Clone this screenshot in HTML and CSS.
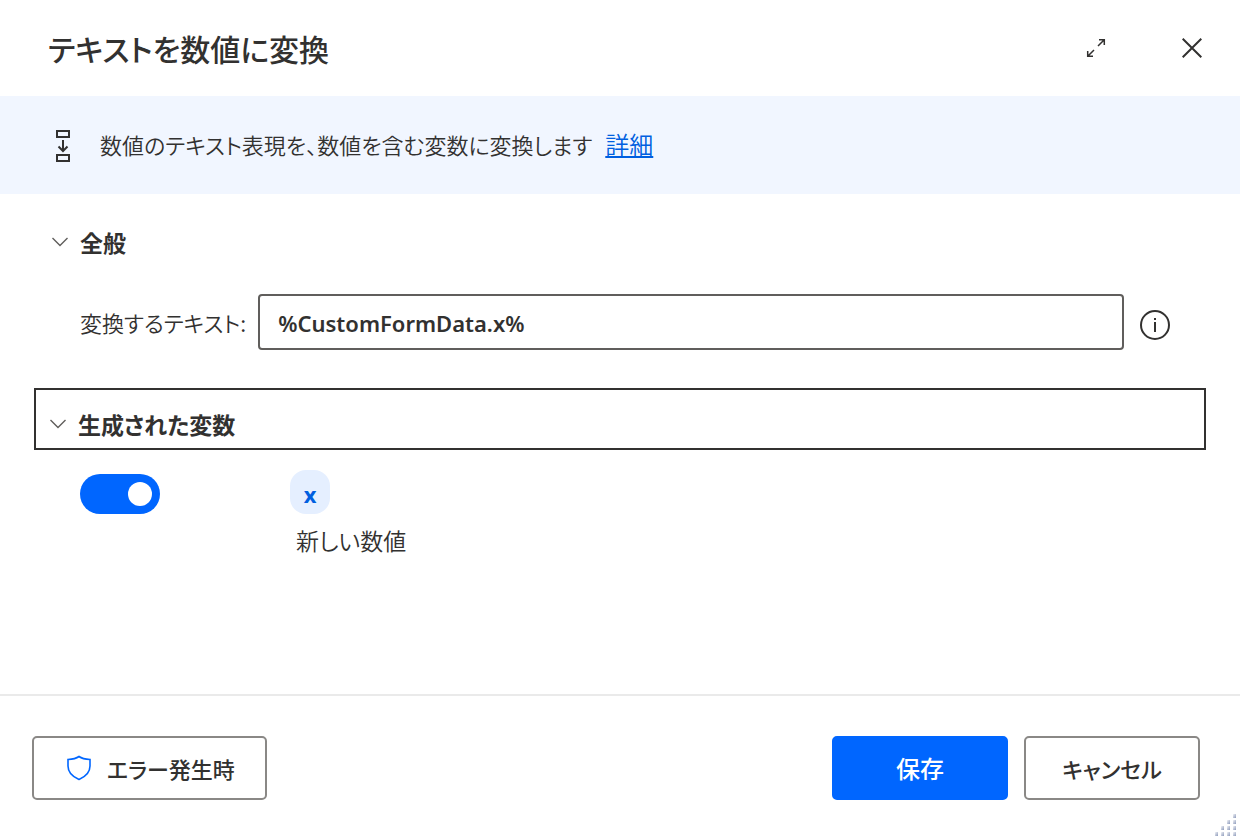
FILE: index.html
```html
<!DOCTYPE html>
<html lang="ja">
<head>
<meta charset="utf-8">
<title>テキストを数値に変換</title>
<link rel="stylesheet" href="styles.css">
</head>
<body>
<main class="dialog">
  <header class="titlebar">
    <h1 class="title">テキストを数値に変換</h1>
    <button class="window-button" type="button" aria-label="拡大">
      <svg width="20" height="20" viewBox="0 0 20 20" fill="none" stroke="currentColor" stroke-width="1.5"><path d="M12 8l6-6M13 1.7h5.3V7M8 12l-6 6M1.7 13v5.3H7"/></svg>
    </button>
    <button class="window-button" type="button" aria-label="閉じる">
      <svg width="20" height="20" viewBox="0 0 20 20" fill="none" stroke="currentColor" stroke-width="2"><path d="M.7.7l18.6 18.6M19.3.7L.7 19.3"/></svg>
    </button>
  </header>

  <section class="banner">
    <svg class="banner-icon" width="14" height="32" viewBox="0 0 14 32" fill="none" stroke="currentColor" stroke-width="2"><path d="M1 1h12v6H1zM1 25h12v6H1zM7 10v11M2.5 16.500L7 21l4.500-4.500"/></svg>
    <p class="banner-text">数値のテキスト表現を、数値を含む変数に変換します <a class="link" href="#">詳細</a></p>
  </section>

  <form class="body" id="action">
    <button class="section-toggle" type="button" aria-expanded="true">
      <svg width="16" height="10" viewBox="0 0 16 10" fill="none" stroke="currentColor" stroke-width="1.4"><path d="M.5 1L8 8.500 15.500 1"/></svg>
      全般
    </button>
    <div class="field">
      <label class="field-label" for="source">変換するテキスト:</label>
      <input class="field-input" id="source" type="text" value="%CustomFormData.x%">
      <button class="info" type="button" aria-label="情報">
        <svg width="30" height="30" viewBox="0 0 30 30" fill="none" stroke="currentColor" stroke-width="2"><circle cx="15" cy="15" r="14"/><path d="M15 12v10M15 8v2"/></svg>
      </button>
    </div>
    <button class="section-toggle section-toggle-focused" type="button" aria-expanded="true">
      <svg width="16" height="10" viewBox="0 0 16 10" fill="none" stroke="currentColor" stroke-width="1.4"><path d="M.5 1L8 8.500 15.500 1"/></svg>
      生成された変数
    </button>
    <div class="variable">
      <input class="switch" type="checkbox" role="switch" aria-label="変数を生成" checked>
      <div class="variable-info">
        <button class="chip" type="button">x</button>
        <span class="variable-type">新しい数値</span>
      </div>
    </div>
  </form>

  <footer class="footer">
    <button class="button button-error" type="button">
      <svg class="shield" width="24" height="26" viewBox="0 0 24 26" fill="none" stroke="currentColor" stroke-width="1.600"><path d="M12 1.500C9.500 3.300 5 4.300 1 4.500V11c0 6 4 10.500 11 13.500C19 21.500 23 17 23 11V4.500C19 4.300 14.500 3.300 12 1.500z"/></svg>
      エラー発生時
    </button>
    <button class="button button-primary" type="submit" form="action">保存</button>
    <button class="button" type="button">キャンセル</button>
  </footer>
  <svg class="grip" width="21" height="22" viewBox="0 0 21 22" aria-hidden="true">
    <defs>
      <linearGradient id="dot" x1="0" y1="0" x2="1" y2="1"><stop offset="0" stop-color="#f4f5f7"/><stop offset="1" stop-color="#8c9abb"/></linearGradient>
    </defs>
    <g fill="url(#dot)">
      <rect x="18" y="0" width="3" height="4"/>
      <rect x="12" y="6" width="3" height="4"/><rect x="18" y="6" width="3" height="4"/>
      <rect x="6" y="12" width="3" height="4"/><rect x="12" y="12" width="3" height="4"/><rect x="18" y="12" width="3" height="4"/>
      <rect x="0" y="18" width="3" height="4"/><rect x="6" y="18" width="3" height="4"/><rect x="12" y="18" width="3" height="4"/><rect x="18" y="18" width="3" height="4"/>
    </g>
  </svg>
</main>
</body>
</html>
```
FILE: styles.css
```css
* { box-sizing: border-box; }

body {
  margin: 0;
  background: #fff;
  color: #323130;
  font: 350 22px/32px "Noto Sans CJK JP", sans-serif;
  font-feature-settings: "palt";
}

button, input { font: inherit; font-feature-settings: inherit; color: inherit; }
button { padding: 0; border: 0; background: none; cursor: pointer; }
svg { display: block; flex: none; }

.dialog {
  position: relative;
  display: flex;
  flex-direction: column;
  min-height: 100vh;
}

.titlebar { display: flex; align-items: stretch; min-height: 96px; padding-left: 48px; }
.title { flex: 1; align-self: center; margin: 0; font-size: 30px; line-height: 48px; font-weight: 500; }
.window-button { display: flex; align-items: center; justify-content: center; width: 96px; }

.banner {
  display: flex;
  align-items: center;
  gap: 30px;
  min-height: 98px;
  padding: 2px 56px 0;
  background: #f1f6ff;
}
.banner-text { margin: 0; padding-bottom: 4px; }
.link { margin-left: 8px; color: #005fe0; font-size: 24px; text-decoration-thickness: 2px; text-underline-offset: 2px; }

.body { flex: 1; display: flex; flex-direction: column; padding: 18px 34px; }

.section-toggle {
  display: flex;
  align-items: center;
  gap: 12px;
  height: 62px;
  padding: 0 18px 2px;
  font-size: 23px;
  font-weight: 700;
  text-align: left;
}
.section-toggle svg { color: #605e5c; }
.section-toggle-focused { padding: 10px 14px 0; border: 2px solid #323130; }

.field { display: flex; align-items: center; gap: 12px; margin: 20px 36px 38px 46px; }
.field-input {
  flex: 1;
  min-width: 0;
  height: 56px;
  padding: 2px 18px 0;
  border: 2px solid #605e5c;
  border-radius: 4px;
  background: #fff;
  font-family: "Noto Sans", sans-serif;
  font-weight: 600;
}
.info { margin: 6px 0 0 4px; }

.variable { display: flex; align-items: flex-start; gap: 130px; padding: 20px 46px; }
.switch {
  flex: none;
  appearance: none;
  display: flex;
  justify-content: flex-end;
  align-items: center;
  width: 80px;
  height: 40px;
  margin: 4px 0 0;
  padding: 0 8px;
  border-radius: 20px;
  background: #06f;
}
.switch::before { content: ""; width: 24px; height: 24px; border-radius: 50%; background: #fff; }
.switch:not(:checked) { justify-content: flex-start; background: #8a8886; }
.variable-info { display: flex; flex-direction: column; align-items: flex-start; gap: 10px; }
.chip {
  width: 40px;
  height: 44px;
  padding-top: 4px;
  border-radius: 16px;
  background: #e5efff;
  color: #005fe0;
  font-family: "Noto Sans", sans-serif;
  font-weight: 700;
}
.variable-type { padding-left: 6px; font-size: 23px; }

.footer {
  display: flex;
  gap: 16px;
  padding: 40px 40px 40px 32px;
  border-top: 2px solid #eaeaea;
}
.button {
  display: flex;
  align-items: center;
  justify-content: center;
  min-width: 176px;
  height: 64px;
  border: 2px solid #8a8886;
  border-radius: 5px;
  background: #fff;
  font-weight: 500;
}
.button-error { gap: 16px; margin-right: auto; padding: 0 30px 0 33px; }
.button-primary { border-color: #06f; background: #06f; color: #fff; font-size: 24px; }
.shield { color: #06f; }

.grip { position: absolute; right: 4px; bottom: 4px; }
```
